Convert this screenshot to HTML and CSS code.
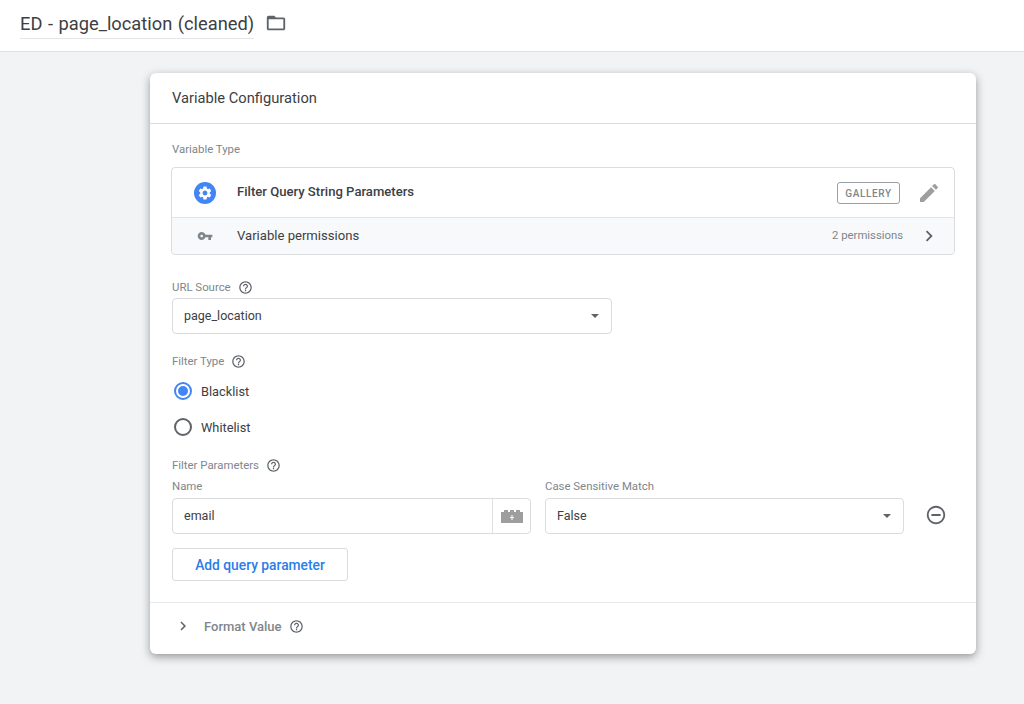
FILE: index.html
```html
<!DOCTYPE html>
<html lang="en">
<head>
<meta charset="utf-8">
<title>ED - page_location (cleaned)</title>
<link rel="stylesheet" href="styles.css">
</head>
<body>
  <header class="topbar">
    <span class="var-name">ED - page_location (cleaned)</span>
    <svg class="folder-icon" viewBox="0 0 24 24" width="22" height="22"><path d="M20 6h-8l-2-2H4c-1.100 0-2 .9-2 2v12c0 1.100.9 2 2 2h16c1.100 0 2-.9 2-2V8c0-1.100-.9-2-2-2zm0 12H4V8h16v10z"/></svg>
  </header>

  <main class="page">
    <section class="card">
      <h2 class="card-title">Variable Configuration</h2>

      <div class="card-body">
        <div class="label label-type">Variable Type</div>
        <div class="type-box">
          <div class="type-row">
            <span class="type-icon">
              <svg viewBox="0 0 24 24" width="16" height="16"><path fill="#fff" d="M19.140 12.940c.04-.3.06-.61.06-.94 0-.32-.02-.64-.07-.94l2.030-1.580c.18-.14.23-.41.12-.61l-1.920-3.320c-.12-.22-.37-.29-.59-.22l-2.390.96c-.5-.38-1.030-.7-1.620-.94l-.36-2.540c-.04-.24-.24-.41-.48-.41h-3.840c-.24 0-.43.17-.47.41l-.36 2.540c-.59.24-1.130.57-1.620.94l-2.390-.96c-.22-.08-.47 0-.59.22L2.740 8.870c-.12.21-.08.47.12.61l2.030 1.580c-.05.3-.09.63-.09.94s.02.64.07.94l-2.030 1.580c-.18.14-.23.41-.12.61l1.920 3.320c.12.22.37.29.59.22l2.390-.96c.5.38 1.030.7 1.620.94l.36 2.540c.05.24.24.41.48.41h3.840c.24 0 .44-.17.47-.41l.36-2.540c.59-.24 1.130-.56 1.620-.94l2.390.96c.22.08.47 0 .59-.22l1.920-3.320c.12-.22.07-.47-.12-.61l-2.010-1.580zM12 15.600c-1.980 0-3.600-1.620-3.600-3.600s1.620-3.600 3.600-3.600 3.600 1.620 3.600 3.600-1.620 3.600-3.600 3.600z"/></svg>
            </span>
            <span class="type-name">Filter Query String Parameters</span>
            <span class="gallery-tag">GALLERY</span>
            <svg class="edit-icon" viewBox="0 0 24 24" width="24" height="24"><path d="M3 17.250V21h3.750L17.810 9.940l-3.750-3.750L3 17.250zM20.710 7.040c.39-.39.39-1.020 0-1.410l-2.340-2.340c-.39-.39-1.020-.39-1.410 0l-1.830 1.830 3.750 3.750 1.830-1.830z"/></svg>
          </div>
          <div class="perm-row">
            <svg class="key-icon" viewBox="0 0 24 24" width="16" height="16"><path d="M12.650 10C11.830 7.670 9.610 6 7 6c-3.310 0-6 2.690-6 6s2.690 6 6 6c2.610 0 4.830-1.670 5.650-4H17v4h4v-4h2v-4H12.650zM7 14c-1.100 0-2-.9-2-2s.9-2 2-2 2 .9 2 2-.9 2-2 2z"/></svg>
            <span class="perm-name">Variable permissions</span>
            <span class="perm-count">2 permissions</span>
            <svg class="chevron" viewBox="0 0 24 24" width="22" height="22"><path d="M8.590 16.590 13.170 12 8.590 7.410 10 6l6 6-6 6z"/></svg>
          </div>
        </div>

        <div class="label label-source">URL Source <svg class="help" viewBox="0 0 24 24" width="15" height="15"><use href="#help-icon"/></svg></div>
        <div class="select select-source">
          <span class="field-text">page_location</span>
          <span class="caret"></span>
        </div>

        <div class="label label-filter">Filter Type <svg class="help" viewBox="0 0 24 24" width="15" height="15"><use href="#help-icon"/></svg></div>
        <div class="radio-row radio-first"><span class="radio radio-on"></span>Blacklist</div>
        <div class="radio-row radio-second"><span class="radio"></span>Whitelist</div>

        <div class="label label-params">Filter Parameters <svg class="help" viewBox="0 0 24 24" width="15" height="15"><use href="#help-icon"/></svg></div>
        <div class="param-grid">
          <div class="param-col name-col">
            <div class="label col-label">Name</div>
            <div class="name-input">
              <span class="field-text name-value">email</span>
              <span class="brick-btn">
                <svg viewBox="0 0 22 13" width="22" height="13"><path fill="#9e9e9e" d="M0 2h3V0h4v2h2V0h4v2h2V0h4v2h3v11H0z"/><path fill="#fff" d="M10.500 5h1v2H13v1h-1.500v2h-1V8H9V7h1.500z"/></svg>
              </span>
            </div>
          </div>
          <div class="param-col match-col">
            <div class="label col-label">Case Sensitive Match</div>
            <div class="select select-match">
              <span class="field-text">False</span>
              <span class="caret"></span>
            </div>
          </div>
          <svg class="remove-icon" viewBox="0 0 24 24" width="22" height="22"><path d="M7 11v2h10v-2H7zm5-9C6.480 2 2 6.480 2 12s4.480 10 10 10 10-4.480 10-10S17.520 2 12 2zm0 18c-4.410 0-8-3.590-8-8s3.590-8 8-8 8 3.590 8 8-3.590 8-8 8z"/></svg>
        </div>
        <button class="add-btn">Add query parameter</button>
      </div>

      <div class="format-row">
        <svg class="format-chevron" viewBox="0 0 24 24" width="18" height="18"><path d="M8.590 16.590 13.170 12 8.590 7.410 10 6l6 6-6 6z"/></svg>
        <span class="format-name">Format Value</span>
        <svg class="help" viewBox="0 0 24 24" width="15" height="15"><use href="#help-icon"/></svg>
      </div>
    </section>
  </main>

  <svg class="defs" width="0" height="0">
    <symbol id="help-icon" viewBox="0 0 24 24">
      <path d="M11 18h2v-2h-2v2zm1-16C6.480 2 2 6.480 2 12s4.480 10 10 10 10-4.480 10-10S17.520 2 12 2zm0 18c-4.410 0-8-3.590-8-8s3.590-8 8-8 8 3.590 8 8-3.590 8-8 8zm0-14c-2.210 0-4 1.790-4 4h2c0-1.100.9-2 2-2s2 .9 2 2c0 2-3 1.750-3 5h2c0-2.250 3-2.500 3-5 0-2.210-1.790-4-4-4z"/>
    </symbol>
  </svg>
</body>
</html>
```

FILE: styles.css
```css
html, body {
  margin: 0;
  height: 100%;
}
body {
  background-color: #f1f3f4;
  color: #3c4043;
  font-family: Roboto, "Liberation Sans", sans-serif;
  overflow: hidden;
}
.defs {
  position: absolute;
}

/* top bar */
.topbar {
  display: flex;
  align-items: flex-start;
  height: 51px;
  background-color: #fff;
  border-bottom: 1px solid #dfe1e3;
  padding-left: 20px;
}
.var-name {
  margin-top: 12px;
  padding-bottom: 2px;
  font-size: 18.300px;
  word-spacing: 1px;
  line-height: 24px;
  color: #3c4043;
  border-bottom: 1px solid #e3e5e8;
}
.folder-icon {
  margin: 12px 0 0 11px;
  fill: #5f6368;
}

/* card */
.page {
  padding: 21px 48px 0 150px;
}
.card {
  height: 581px;
  background-color: #fff;
  border-radius: 6px;
  box-shadow: 0 3px 9px rgba(60, 64, 67, 0.5);
}
.card-title {
  margin: 0;
  height: 50px;
  padding-left: 22px;
  font-size: 14.700px;
  font-weight: 400;
  line-height: 50px;
  color: #3c4043;
  border-bottom: 1px solid #dadce0;
}
.card-body {
  height: 478px;
  padding: 0 21px 0 22px;
  border-bottom: 1px solid #e8eaed;
}
.label {
  display: flex;
  align-items: center;
  font-size: 11.400px;
  line-height: 14px;
  color: #80868b;
}
.help {
  margin: -1px 0 -1px 7px;
  fill: #5f6368;
}
.label-type {
  padding-top: 18px;
}

/* variable type box */
.type-box {
  margin: 11px 0 0 -1px;
  height: 86px;
  border: 1px solid #dadce0;
  border-radius: 4px;
}
.type-row {
  display: flex;
  align-items: center;
  height: 49px;
  border-bottom: 1px solid #e3e5e8;
}
.type-icon {
  display: flex;
  align-items: center;
  justify-content: center;
  width: 22px;
  height: 22px;
  margin-left: 22px;
  border-radius: 50%;
  background-color: #4285f4;
}
.type-name {
  flex: 1;
  margin-left: 21px;
  padding-bottom: 2px;
  font-size: 13.100px;
  font-weight: 500;
  color: #3c4043;
}
.gallery-tag {
  width: 61px;
  height: 20px;
  border: 1px solid #9aa0a6;
  border-radius: 3px;
  font-size: 10px;
  font-weight: 500;
  letter-spacing: 0.6px;
  line-height: 21px;
  text-align: center;
  color: #80868b;
}
.edit-icon {
  margin: 0 13px 0 17px;
  fill: #9e9e9e;
}
.perm-row {
  display: flex;
  align-items: center;
  height: 36px;
  background-color: #f8f9fa;
  border-radius: 0 0 4px 4px;
}
.key-icon {
  margin-left: 25px;
  fill: #80868b;
}
.perm-name {
  flex: 1;
  margin-left: 24px;
  padding-bottom: 2px;
  font-size: 13.100px;
  color: #3c4043;
}
.perm-count {
  padding-bottom: 2px;
  font-size: 11.300px;
  color: #80868b;
}
.chevron {
  margin: 0 14px 0 15px;
  fill: #5f6368;
}

/* selects */
.select {
  display: flex;
  align-items: center;
  justify-content: space-between;
  box-sizing: border-box;
  height: 36px;
  padding: 0 12px 0 11px;
  border: 1px solid #dadce0;
  border-radius: 4px;
  font-size: 12.500px;
  color: #3c4043;
}
.field-text {
  padding-bottom: 2px;
}
.caret {
  width: 0;
  height: 0;
  border-left: 4.500px solid transparent;
  border-right: 4.500px solid transparent;
  border-top: 4.500px solid #5f6368;
}
.label-source {
  margin-top: 25px;
}
.select-source {
  margin-top: 4px;
  width: 440px;
}
.label-filter {
  margin-top: 20px;
}

/* radios */
.radio-row {
  display: flex;
  align-items: center;
  height: 20px;
  font-size: 12.800px;
  color: #3c4043;
}
.radio-first {
  margin-top: 13px;
}
.radio-second {
  margin-top: 16px;
}
.radio {
  box-sizing: border-box;
  position: relative;
  width: 18px;
  height: 18px;
  margin: 0 9px 0 2px;
  border: 2px solid #5f6368;
  border-radius: 50%;
}
.radio-on {
  border-color: #4285f4;
}
.radio-on::after {
  content: "";
  position: absolute;
  inset: 2px;
  border-radius: 50%;
  background-color: #4285f4;
}

/* filter parameters */
.label-params {
  margin-top: 21px;
}
.param-grid {
  display: flex;
  align-items: flex-end;
  margin-top: 7px;
}
.col-label {
  margin-bottom: 5px;
}
.name-col {
  width: 359px;
}
.match-col {
  width: 359px;
  margin-left: 14px;
}
.name-input {
  display: flex;
  align-items: center;
  box-sizing: border-box;
  height: 36px;
  border: 1px solid #dadce0;
  border-radius: 4px;
  font-size: 12.500px;
  color: #3c4043;
}
.name-value {
  flex: 1;
  padding-left: 11px;
}
.brick-btn {
  display: flex;
  align-items: center;
  justify-content: center;
  width: 37px;
  height: 34px;
  border-left: 1px solid #e0e0e0;
}
.remove-icon {
  margin: 0 0 8px 21px;
  fill: #5f6368;
}
.add-btn {
  display: block;
  width: 176px;
  height: 33px;
  margin-top: 14px;
  padding: 0;
  background-color: #fff;
  border: 1px solid #dadce0;
  border-radius: 3px;
  font-family: inherit;
  font-size: 13.800px;
  font-weight: 500;
  color: #2b7de9;
}

/* format value */
.format-row {
  display: flex;
  align-items: center;
  height: 46px;
  padding-left: 24px;
}
.format-chevron {
  fill: #5f6368;
}
.format-name {
  margin-left: 12px;
  font-size: 13px;
  font-weight: 500;
  color: #80868b;
}
```
